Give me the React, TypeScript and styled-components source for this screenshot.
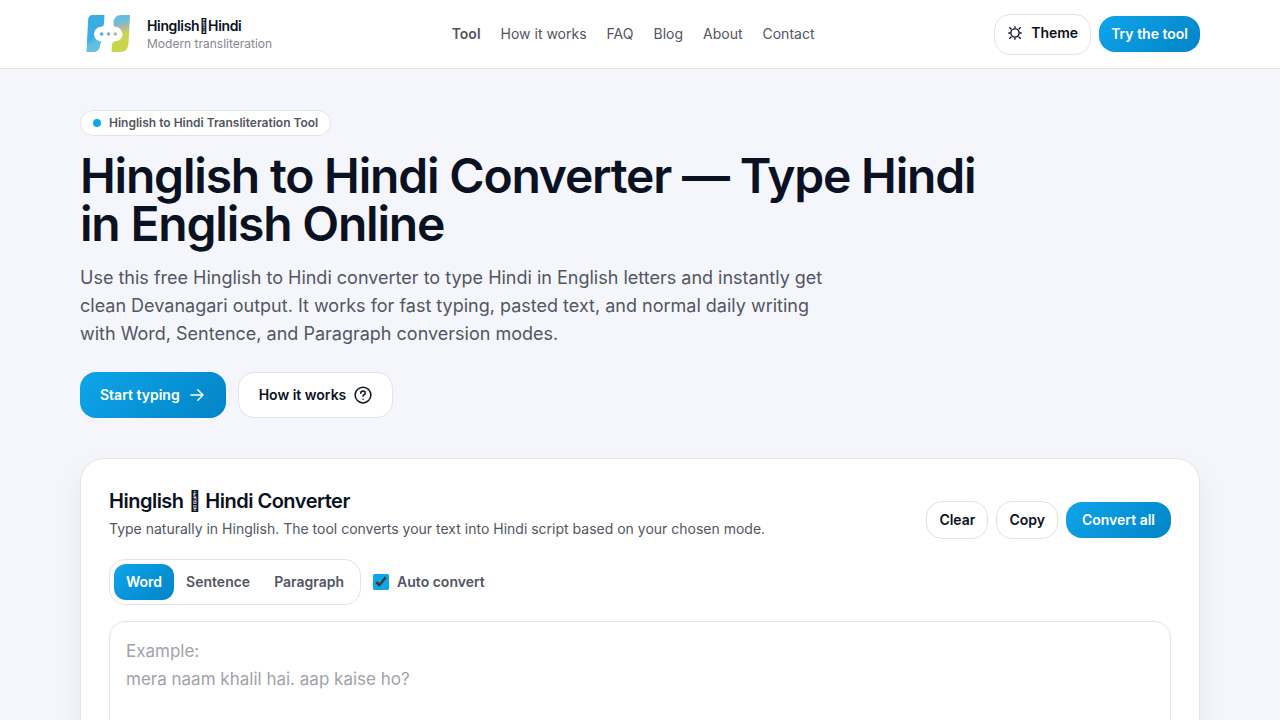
import React from 'react';
import styled, { createGlobalStyle, css } from 'styled-components';

const Global = createGlobalStyle`
  *, *::before, *::after { box-sizing: border-box; }
  body { margin: 0; background: #f5f6fc; color: #0a1222; font-family: Inter, "Liberation Sans", sans-serif; font-size: 16px; line-height: 24px; -webkit-font-smoothing: antialiased; }
  h1, h2, p { margin: 0; }
  button, textarea { font: inherit; margin: 0; }
  a { color: inherit; text-decoration: none; }
`;
const Page = styled.div`height: 100vh; overflow: hidden;`;
const Header = styled.header`background: #fff; border-bottom: 1px solid #e4e4e7; height: 69px;`;
const Container = styled.div`width: 1120px; margin: 0 auto;`;
const HeaderRow = styled(Container)`display: flex; align-items: center; justify-content: space-between; height: 68px;`;
const Brand = styled.a`display: flex; align-items: center; gap: 12px; width: 192px;`;
const BrandText = styled.div`padding-top: 1px; white-space: nowrap;`;
const Logo = styled.svg`width: 55px; height: 44px; display: block; flex: none;`;
const BrandName = styled.div`font-size: 14px; line-height: 17.5px; font-weight: 600; letter-spacing: -0.35px;`;
const BrandSub = styled.div`font-size: 12px; line-height: 16px; color: #858792; margin-top: 2px;`;
const Nav = styled.nav`display: flex; gap: 20px; font-size: 14px; line-height: 20px; color: #525562;`;
const NavLink = styled.a<{ $active?: boolean }>`font-weight: ${p => (p.$active ? 600 : 400)};`;
const Actions = styled.div`display: flex; align-items: center; gap: 8px;`;
const Button = styled.button<{ $primary?: boolean; $size?: 'lg' | 'theme' | 'wide' }>`
  display: inline-flex; align-items: center; justify-content: center; gap: 8px;
  border: 1px solid #e4e4e7; border-radius: 16px; background: #fff; color: #0a1222;
  font-size: 14px; line-height: 20px; font-weight: 600; padding: 8px 12px; white-space: nowrap;
  ${p => p.$primary && css`border: 0; color: #fff; background: linear-gradient(135deg, #0ea5e9, #0284c7);`}
  ${p => p.$size === 'wide' && css`padding: 8px 16px;`}
  ${p => p.$size === 'theme' && css`height: 41px; padding-bottom: 10px;`}
  ${p => p.$size === 'lg' && css`height: 46px; padding: 0 20px;`}
`;
const Hero = styled(Container)`padding-top: 41px;`;
const Pill = styled.div`display: inline-flex; align-items: center; gap: 8px; height: 26px; padding: 0 12px; border: 1px solid #e4e4e7; border-radius: 13px; background: #fff; font-size: 12px; line-height: 16px; font-weight: 600; color: #525562;`;
const Dot = styled.span`width: 8px; height: 8px; border-radius: 50%; background: #0ea5e9;`;
const Title = styled.h1`width: 896px; margin-top: 16px; font-size: 48px; line-height: 48px; font-weight: 600; letter-spacing: -1.2px;`;
const Lead = styled.p`width: 768px; margin-top: 16px; font-size: 18px; line-height: 28px; color: #525562;`;
const HeroButtons = styled.div`display: flex; gap: 12px; margin-top: 24px;`;
const PillRow = styled.div`display: flex;`;
const Card = styled.section`margin-top: 40px; height: 600px; padding: 28px; border: 1px solid #e4e4e7; border-radius: 24px; background: #fff; box-shadow: 0 12px 30px rgba(10, 18, 34, 0.06);`;
const CardHead = styled.div`display: flex; justify-content: space-between; align-items: flex-end;`;
const CardTitle = styled.h2`font-size: 20px; line-height: 28px; font-weight: 600; letter-spacing: -0.5px;`;
const CardText = styled.p`margin-top: 4px; font-size: 14px; line-height: 20px; color: #525562;`;
const Controls = styled.div`display: flex; align-items: center; gap: 12px; margin-top: 20px;`;
const Tabs = styled.div`display: flex; padding: 4px; height: 46px; border: 1px solid #e4e4e7; border-radius: 16px;`;
const Tab = styled.button<{ $active?: boolean }>`
  border: 0; border-radius: 12px; padding: 8px 12px; font-size: 14px; line-height: 20px; font-weight: 600;
  color: ${p => (p.$active ? '#fff' : '#525562')};
  background: ${p => (p.$active ? 'linear-gradient(135deg, #0ea5e9, #0284c7)' : 'transparent')};
`;
const CheckLabel = styled.label`display: flex; align-items: center; gap: 8px; font-size: 14px; line-height: 20px; font-weight: 600; color: #525562;`;
const Check = styled.input`width: 16px; height: 16px; margin: 0; accent-color: #0ea5e9;`;
const Input = styled.textarea`display: block; width: 100%; height: 280px; margin-top: 16px; padding: 15px 16px; border: 1px solid #e4e4e7; border-radius: 16px; background: #fff; font-size: 17px; line-height: 28px; resize: none; outline: none; &::placeholder { color: #9fa2aa; }`;

const BrandLogo = () => (
  <Logo viewBox="0 0 55 44">
    <defs>
      <linearGradient id="l" x1="0" y1="0" x2="0.3" y2="1"><stop offset="0.65" stopColor="#3aaee2" /><stop offset="0.8" stopColor="#62bfdf" /></linearGradient>
      <linearGradient id="r" x1="0.7" y1="0" x2="0.8" y2="1"><stop offset="0.12" stopColor="#65bfdc" /><stop offset="0.3" stopColor="#a8b5ad" /><stop offset="0.5" stopColor="#c7d64d" /></linearGradient>
    </defs>
    <path fill="url(#l)" d="M12.500 3H24.500L24 12Q23.500 15 21 15.500V31Q20 32 20 34Q19 40 13 40H6.500L8 10C8.300 5 9 3 12.500 3Z" />
    <path fill="url(#r)" d="M41 3H50L48.500 30C48.200 37 46 40 40 40H31.500L32 32Q32.500 30 35 29V15Q33 14 33.500 11Q34 3 41 3Z" />
    <rect x="14" y="14.800" width="28.500" height="14.500" rx="7.250" fill="#fff" />
    <circle cx="21.700" cy="22" r="1.700" fill="#3aaee2" /><circle cx="28.500" cy="22" r="1.700" fill="#7baebb" /><circle cx="35.300" cy="22" r="1.700" fill="#b3ba78" />
  </Logo>
);
const Sun = () => (
  <svg width="16" height="16" viewBox="0 0 24 24" fill="none" stroke="currentColor" strokeWidth="2"><circle cx="12" cy="12" r="6.2" /><path d="M12 2v3M12 19v3M2 12h3M19 12h3M3.500 3.500l3 3M17.500 17.500l3 3M3.500 20.500l3-3M17.500 6.500l3-3" /></svg>
);
const Arrow = () => (
  <svg width="18" height="18" viewBox="0 0 24 24" fill="none" stroke="currentColor" strokeWidth="2" strokeLinecap="round" strokeLinejoin="round"><path d="M4 12h16M13 5l7 7-7 7" /></svg>
);
const Help = () => (
  <svg width="18" height="18" viewBox="0 0 24 24" fill="none" stroke="currentColor" strokeWidth="2" strokeLinecap="round"><circle cx="12" cy="12" r="10.5" /><path d="M9 9.500c0-4 6-4 6 0 0 2.200-3 2-3 4.300M12 17.500v.1" /></svg>
);

export default function App() {
  return (
    <Page>
      <Global />
      <Header>
        <HeaderRow>
          <Brand href="#"><BrandLogo /><BrandText><BrandName>Hinglish{'\uf061'}Hindi</BrandName><BrandSub>Modern transliteration</BrandSub></BrandText></Brand>
          <Nav>
            <NavLink href="#" $active>Tool</NavLink>
            {['How it works', 'FAQ', 'Blog', 'About', 'Contact'].map(t => <NavLink href="#" key={t}>{t}</NavLink>)}
          </Nav>
          <Actions><Button $size="theme"><Sun />Theme</Button><Button $primary>Try the tool</Button></Actions>
        </HeaderRow>
      </Header>
      <Hero as="main">
        <PillRow><Pill><Dot />Hinglish to Hindi Transliteration Tool</Pill></PillRow>
        <Title>Hinglish to Hindi Converter — Type Hindi in English Online</Title>
        <Lead>Use this free Hinglish to Hindi converter to type Hindi in English letters and instantly get clean Devanagari output. It works for fast typing, pasted text, and normal daily writing with Word, Sentence, and Paragraph conversion modes.</Lead>
        <HeroButtons>
          <Button $primary $size="lg">Start typing <Arrow /></Button>
          <Button $size="lg">How it works <Help /></Button>
        </HeroButtons>
        <Card>
          <CardHead>
            <div><CardTitle>Hinglish {'\uf061'} Hindi Converter</CardTitle><CardText>Type naturally in Hinglish. The tool converts your text into Hindi script based on your chosen mode.</CardText></div>
            <Actions><Button>Clear</Button><Button>Copy</Button><Button $primary $size="wide">Convert all</Button></Actions>
          </CardHead>
          <Controls>
            <Tabs><Tab $active>Word</Tab><Tab>Sentence</Tab><Tab>Paragraph</Tab></Tabs>
            <CheckLabel><Check type="checkbox" defaultChecked />Auto convert</CheckLabel>
          </Controls>
          <Input placeholder={'Example:\nmera naam khalil hai. aap kaise ho?'} />
        </Card>
      </Hero>
    </Page>
  );
}
